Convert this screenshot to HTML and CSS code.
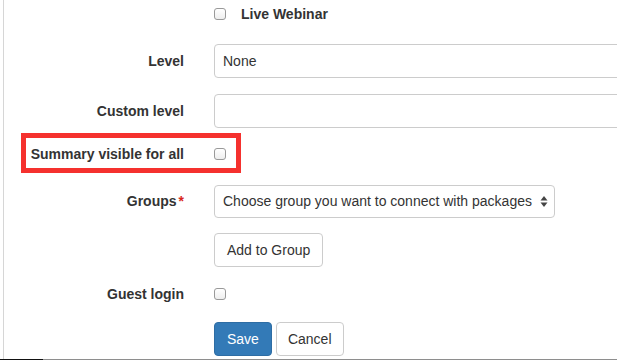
FILE: index.html
```html
<!DOCTYPE html>
<html lang="en">
<head>
  <meta charset="UTF-8" />
  <meta name="viewport" content="width=device-width, initial-scale=1.0" />
  <title>Package settings</title>
  <link rel="stylesheet" href="styles.css">
</head>
<body>
  <div class="page">
    <form class="form">
      <div class="row row-webinar">
        <div class="label-col"></div>
        <div class="field-col">
          <label class="check">
            <input type="checkbox" />
            <span>Live Webinar</span>
          </label>
        </div>
      </div>

      <div class="row row-level">
        <label class="label-col" for="level">Level</label>
        <div class="field-col">
          <input id="level" class="control wide" type="text" value="None" />
        </div>
      </div>

      <div class="row row-custom">
        <label class="label-col" for="customLevel">Custom level</label>
        <div class="field-col">
          <input id="customLevel" class="control wide" type="text" />
        </div>
      </div>

      <div class="row row-summary highlighted">
        <label class="label-col" for="summary">Summary visible for all</label>
        <div class="field-col">
          <input id="summary" type="checkbox" />
        </div>
      </div>

      <div class="row row-groups">
        <label class="label-col">Groups<span class="req">*</span></label>
        <div class="field-col">
          <div class="control select">
            <span>Choose group you want to connect with packages</span>
            <svg class="arrows" width="8" height="13" viewBox="0 0 8 13">
              <path d="M4 1 L7.5 5.5 L0.5 5.5 Z" fill="#444" />
              <path d="M4 12 L7.5 7.5 L0.5 7.5 Z" fill="#444" />
            </svg>
          </div>
        </div>
      </div>

      <div class="row row-add">
        <div class="label-col"></div>
        <div class="field-col">
          <button type="button" class="btn">Add to Group</button>
        </div>
      </div>

      <div class="row row-guest">
        <label class="label-col" for="guest">Guest login</label>
        <div class="field-col">
          <input id="guest" type="checkbox" />
        </div>
      </div>

      <div class="row row-actions">
        <div class="label-col"></div>
        <div class="field-col actions">
          <button type="submit" class="btn btn-primary">Save</button>
          <button type="button" class="btn btn-cancel">Cancel</button>
        </div>
      </div>
    </form>
  </div>

  <div class="status-line"><span class="status-dark"></span></div>
</body>
</html>
```

FILE: styles.css
```css
html, body {
  margin: 0;
  padding: 0;
  overflow: hidden;
}

body {
  font-family: "Liberation Sans", Arial, sans-serif;
  font-size: 14px;
  color: #333;
  background: white;
  width: 617px;
  height: 360px;
}

.page {
  margin-left: 3px;
  height: 359px;
  border-left: 1px solid #d6d6d6;
}

.form {
  display: flex;
  flex-direction: column;
}

.row {
  display: flex;
  align-items: center;
  height: 34px;
}

.row-webinar { height: 28px; }
.row-level { margin-top: 16px; }
.row-custom { margin-top: 16px; }
.row-summary { margin-top: 9px; }
.row-groups { margin-top: 13px; }
.row-add { margin-top: 15px; }
.row-guest { margin-top: 10px; }
.row-actions { margin-top: 11px; }

.label-col {
  flex: 0 0 195px;
  box-sizing: border-box;
  padding-right: 15px;
  text-align: right;
  font-weight: bold;
  white-space: nowrap;
}

.field-col {
  flex: 1;
  display: flex;
  align-items: center;
  padding-left: 15px;
  min-width: 0;
}

.req {
  color: #d9261c;
  margin-left: 2px;
}

.check {
  display: flex;
  align-items: center;
  font-weight: bold;
}

.check span {
  margin-left: 15px;
}

input[type="checkbox"] {
  appearance: none;
  -webkit-appearance: none;
  width: 12px;
  height: 12px;
  margin: 0;
  border: 1px solid #999;
  border-radius: 3px;
  background: linear-gradient(#fff, #eee);
}

.control {
  box-sizing: border-box;
  height: 34px;
  padding: 0 8px;
  border: 1px solid #ccc;
  border-radius: 4px;
  font-family: inherit;
  font-size: 14px;
  color: #333;
  background: white;
}

.wide {
  width: 430px;
  flex: none;
}

.select {
  display: flex;
  align-items: center;
  justify-content: space-between;
  width: 341px;
  height: 33px;
  padding-right: 6px;
  white-space: nowrap;
}

.arrows {
  display: block;
}

.highlighted {
  position: relative;
}

.highlighted::after {
  content: "";
  position: absolute;
  left: 17px;
  top: -4px;
  width: 220px;
  height: 40px;
  box-sizing: border-box;
  border: 5px solid #f5312e;
  pointer-events: none;
}

.btn {
  box-sizing: border-box;
  height: 34px;
  padding: 0 12px;
  border: 1px solid #ccc;
  border-radius: 4px;
  background: white;
  color: #333;
  font-family: inherit;
  font-size: 14px;
  cursor: pointer;
}

.btn-primary {
  background: #337ab7;
  border-color: #2e6da4;
  color: white;
}

.btn-cancel {
  padding: 0 11px;
}

.actions {
  gap: 4px;
}

.status-line {
  height: 1px;
  background: #8e8e8e;
}

.status-dark {
  display: block;
  width: 43px;
  height: 1px;
  background: #111;
}
```
